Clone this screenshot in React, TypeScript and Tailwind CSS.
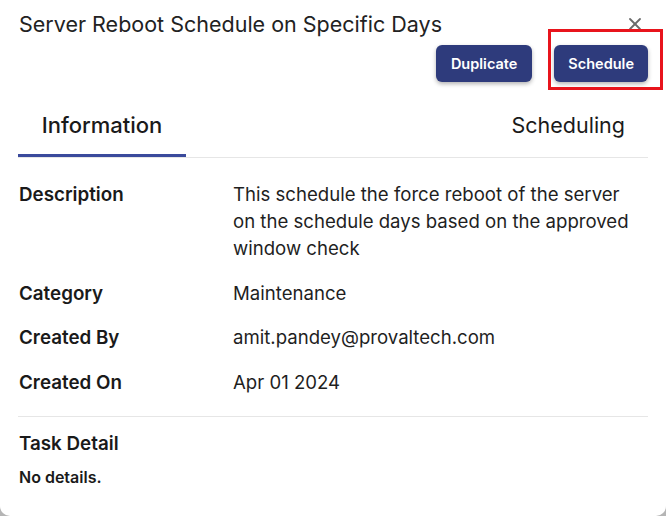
import { X } from 'lucide-react';

const rows = [
    {
        label: 'Description',
        value: 'This schedule the force reboot of the server on the schedule days based on the approved window check',
    },
    { label: 'Category', value: 'Maintenance' },
    { label: 'Created By', value: 'amit.pandey@provaltech.com' },
    { label: 'Created On', value: 'Apr 01 2024' },
];

export default function App() {
    return (
        <div className="w-[666px] h-[516px] bg-[#b5b5b5] overflow-hidden" style={{ fontFamily: 'Inter, "Noto Sans", sans-serif' }}>
            <div className="relative w-full h-full bg-white rounded-b-[10px] text-[#1f1f1f]">
                {/* Header */}
                <div className="flex items-start justify-between pl-[19px] pr-[21px] pt-[9px]">
                    <h2 className="text-[21.5px] leading-[30px] font-normal text-[#222]">Server Reboot Schedule on Specific Days</h2>
                    <button className="mt-[5px] text-[#6b6b6b]">
                        <X size={20} strokeWidth={2.2} />
                    </button>
                </div>
                <div className="flex justify-end gap-[22px] pr-[18px] mt-[6px]">
                    <button className="h-[37px] px-[15px] rounded-[6px] bg-[#2e3b7c] text-white text-[14.5px] font-semibold shadow-[0_2px_4px_rgba(0,0,0,0.3)]">
                        Duplicate
                    </button>
                    <button className="h-[37px] px-[14px] rounded-[6px] bg-[#2e3b7c] text-white text-[14.5px] font-semibold shadow-[0_2px_4px_rgba(0,0,0,0.3)]">
                        Schedule
                    </button>
                </div>
                {/* Annotation box */}
                <div className="absolute left-[548px] top-[29px] w-[115px] h-[61px] border-[3px] border-[#e8141c]" />

                {/* Tabs */}
                <div className="mx-[18px] mt-[28px] flex justify-between border-b border-[#e6e6e6]">
                    <div className="w-[168px] h-[47px] flex justify-center items-start border-b-[3px] border-[#3a4a9c] -mb-px">
                        <span className="text-[22px] leading-[30px] font-medium text-[#1a1a1a]">Information</span>
                    </div>
                    <div className="h-[47px] pr-[23px]">
                        <span className="text-[21.5px] leading-[30px] font-normal text-[#1a1a1a]">Scheduling</span>
                    </div>
                </div>

                {/* Info rows */}
                <div className="mx-[18px] pt-[23px] pb-[20px] flex flex-col gap-[17.5px] border-b border-[#e6e6e6]">
                    {rows.map((r) => (
                        <div key={r.label} className="flex">
                            <div className="w-[215px] shrink-0 pl-px text-[18.8px] leading-[27px] font-semibold text-[#1a1a1a]">{r.label}</div>
                            <div className="w-[410px] text-[18.6px] leading-[27px] text-[#1f1f1f]">{r.value}</div>
                        </div>
                    ))}
                </div>

                {/* Task detail */}
                <div className="mx-[18px] pt-[13px] pl-px">
                    <div className="text-[18.8px] leading-[27px] font-semibold text-[#1a1a1a]">Task Detail</div>
                    <div className="mt-[9px] text-[16px] leading-[22px] font-semibold text-[#1a1a1a]">No details.</div>
                </div>
            </div>
        </div>
    );
}
